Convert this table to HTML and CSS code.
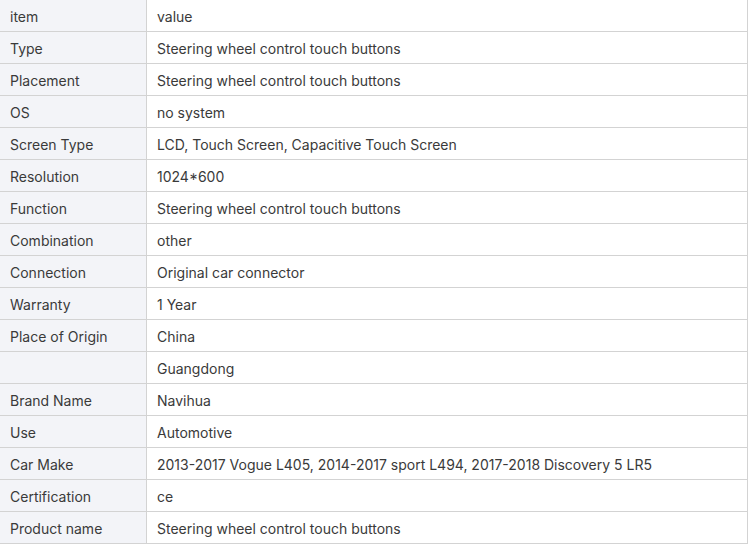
FILE: index.html
```html
<!DOCTYPE html>
<html>
<head>
<meta charset="utf-8">
<link rel="stylesheet" href="styles.css">
</head>
<body>
<table class="spec">
<tbody>
<tr><td class="k">item</td><td class="v">value</td></tr>
<tr><td class="k">Type</td><td class="v">Steering wheel control touch buttons</td></tr>
<tr><td class="k">Placement</td><td class="v">Steering wheel control touch buttons</td></tr>
<tr><td class="k">OS</td><td class="v">no system</td></tr>
<tr><td class="k">Screen Type</td><td class="v">LCD, Touch Screen, Capacitive Touch Screen</td></tr>
<tr><td class="k">Resolution</td><td class="v">1024*600</td></tr>
<tr><td class="k">Function</td><td class="v">Steering wheel control touch buttons</td></tr>
<tr><td class="k">Combination</td><td class="v">other</td></tr>
<tr><td class="k">Connection</td><td class="v">Original car connector</td></tr>
<tr><td class="k">Warranty</td><td class="v">1 Year</td></tr>
<tr><td class="k">Place of Origin</td><td class="v">China</td></tr>
<tr><td class="k"></td><td class="v">Guangdong</td></tr>
<tr><td class="k">Brand Name</td><td class="v">Navihua</td></tr>
<tr><td class="k">Use</td><td class="v">Automotive</td></tr>
<tr><td class="k">Car Make</td><td class="v">2013-2017 Vogue L405, 2014-2017 sport L494, 2017-2018 Discovery 5 LR5</td></tr>
<tr><td class="k">Certification</td><td class="v">ce</td></tr>
<tr><td class="k">Product name</td><td class="v">Steering wheel control touch buttons</td></tr>
</tbody>
</table>
</body>
</html>
```
FILE: styles.css
```css
html, body {
  margin: 0;
  padding: 0;
  background: #fff;
}
.spec {
  border-collapse: separate;
  border-spacing: 0;
  width: 748px;
  table-layout: fixed;
  font-family: Inter, "Noto Sans", sans-serif;
  font-size: 14px;
  color: #3a3a3a;
}
.spec td {
  height: 32px;
  padding: 1px 10px 0;
  border-bottom: 1px solid #d3d3d3;
  border-right: 1px solid #d3d3d3;
  vertical-align: middle;
  white-space: nowrap;
  box-sizing: border-box;
}
.spec .k {
  width: 147px;
  background: #f3f4f8;
}
.spec .v {
  background: #fff;
}
```
